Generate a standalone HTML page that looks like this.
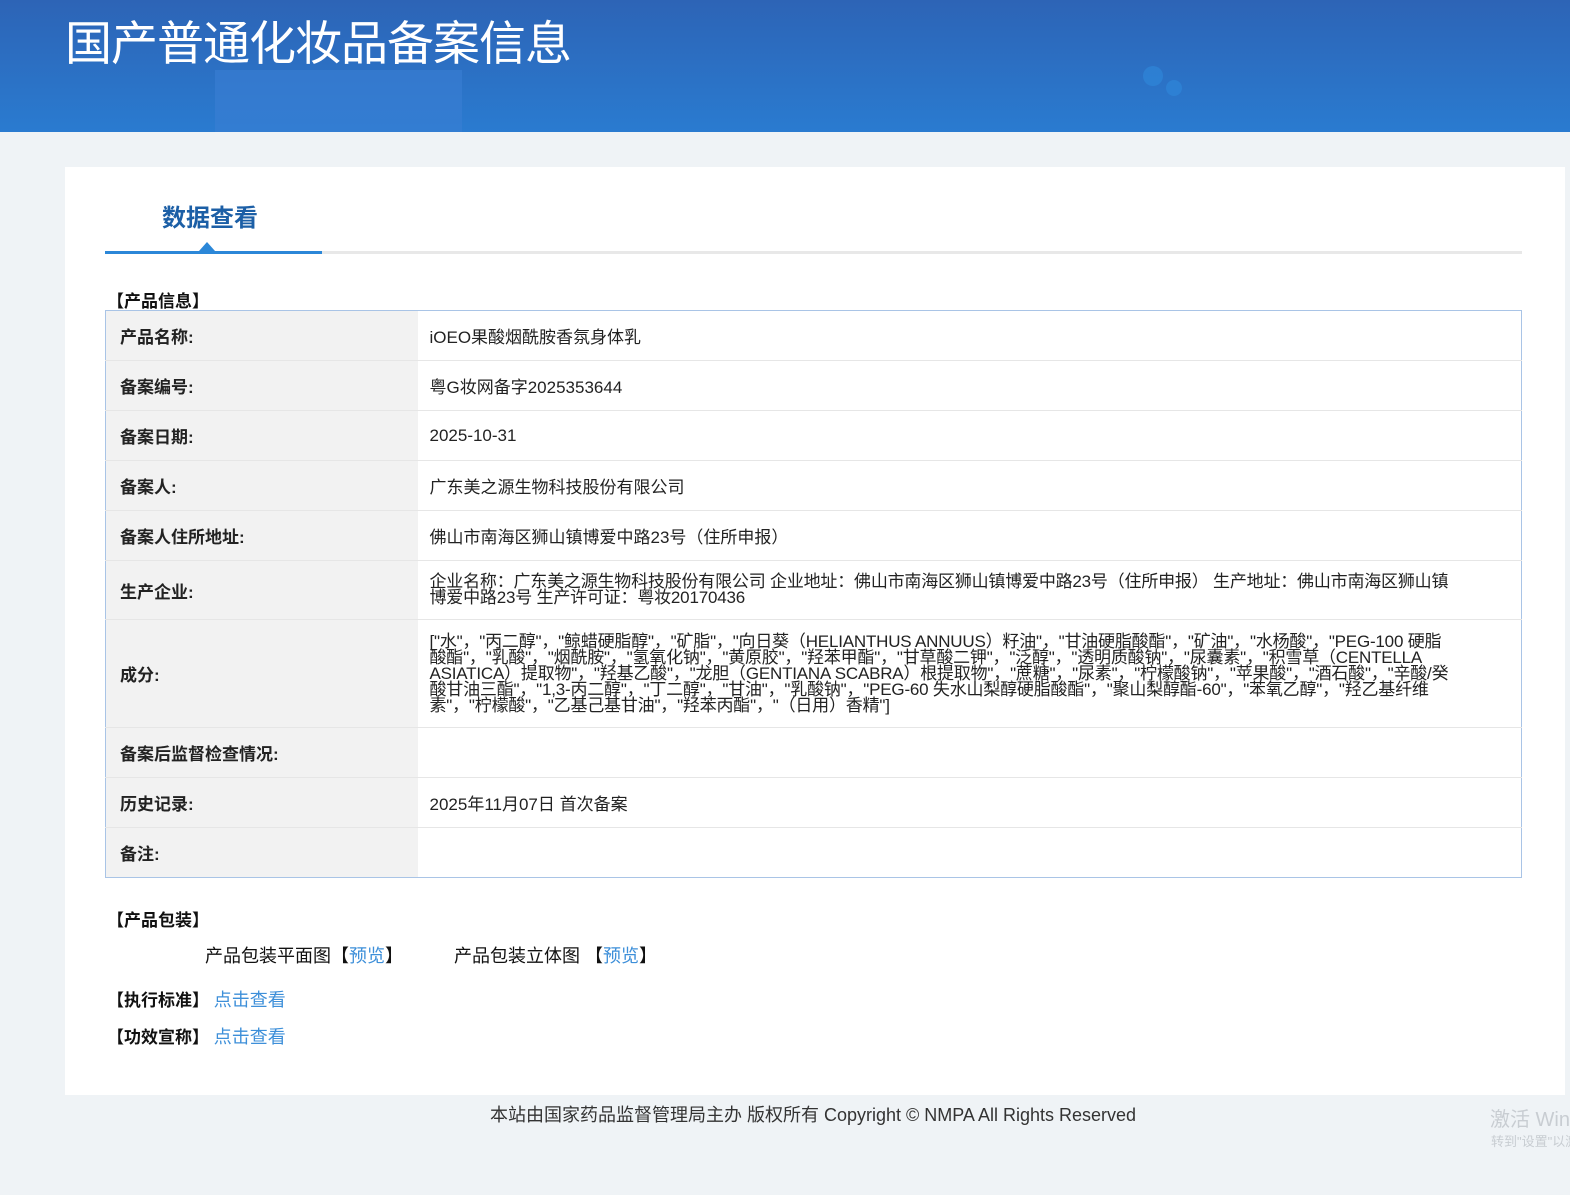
<!DOCTYPE html>
<html><head><meta charset="utf-8"><style>
*{margin:0;padding:0;box-sizing:border-box}
html,body{width:1570px;height:1195px;overflow:hidden}
body{background:#eff3f6;font-family:"Liberation Sans","Noto Sans CJK SC",sans-serif;color:#222;position:relative}
.hd{position:absolute;left:0;top:0;width:1570px;height:132px;background:linear-gradient(180deg,#2d64b6 0%,#2a7bd0 100%);overflow:hidden}
.hd .s1{position:absolute;left:215px;top:70px;width:247px;height:70px;background:#3b7fd4;opacity:.6}
.hd .c1{position:absolute;left:1143px;top:66px;width:20px;height:20px;border-radius:50%;background:#2f86d8;opacity:.7}
.hd .c2{position:absolute;left:1166px;top:80px;width:16px;height:16px;border-radius:50%;background:#2f86d8;opacity:.7}
.hd h1{position:absolute;left:65px;top:5px;font-size:47px;font-weight:normal;color:#fff;letter-spacing:-1px}
.card{position:absolute;left:65px;top:167px;width:1500px;height:928px;background:#fff}
.tab{position:absolute;left:97px;top:31px;font-size:24px;font-weight:bold;color:#1c5fa6}
.line{position:absolute;left:40px;top:84px;width:1417px;height:3px;background:#e8e8e8}
.line b{position:absolute;left:0;top:0;width:217px;height:3px;background:#2b87d8}
.tri{position:absolute;left:134px;top:75px;width:0;height:0;border-left:8px solid transparent;border-right:8px solid transparent;border-bottom:9px solid #2b87d8}
.sec{position:absolute;font-size:17px;font-weight:bold;color:#111}
table{position:absolute;left:40px;top:143px;width:1417px;border-collapse:collapse;border:1px solid #a9c4e6;font-size:17px}
td{border-top:1px solid #e6e6e6;height:50px;vertical-align:middle}
td.l{width:312px;background:#f2f2f2;padding-left:14px;font-weight:bold;color:#222}
td.v{padding-left:12px;padding-right:70px;color:#222}
td.t{line-height:16px;letter-spacing:-0.2px}
a{color:#3d8fd9;text-decoration:none}
.pk{position:absolute;font-size:18px;color:#111}
.ft{position:absolute;left:0;width:1570px;padding-left:56px;top:1101px;text-align:center;font-size:18px;color:#333}
.wm{position:absolute;left:1490px;top:1103px;width:80px;overflow:hidden;color:#c8cdd2;font-size:20px;white-space:nowrap}
.wm2{position:absolute;left:1491px;top:1131px;width:79px;overflow:hidden;color:#c8cdd2;font-size:13px;white-space:nowrap}
</style></head><body>
<div class="hd"><div class="s1"></div><div class="c1"></div><div class="c2"></div><h1>国产普通化妆品备案信息</h1></div>
<div class="card">
<div class="tab">数据查看</div>
<div class="line"><b></b></div><div class="tri"></div>
<div class="sec" style="left:42px;top:120px">【产品信息】</div>
<table>
<tr><td class="l" style="border-top:0">产品名称:</td><td class="v" style="border-top:0">iOEO果酸烟酰胺香氛身体乳</td></tr>
<tr><td class="l">备案编号:</td><td class="v">粤G妆网备字2025353644</td></tr>
<tr><td class="l">备案日期:</td><td class="v">2025-10-31</td></tr>
<tr><td class="l">备案人:</td><td class="v">广东美之源生物科技股份有限公司</td></tr>
<tr><td class="l">备案人住所地址:</td><td class="v">佛山市南海区狮山镇博爱中路23号（住所申报）</td></tr>
<tr><td class="l" style="height:59px">生产企业:</td><td class="v t">企业名称：广东美之源生物科技股份有限公司 企业地址：佛山市南海区狮山镇博爱中路23号（住所申报） 生产地址：佛山市南海区狮山镇博爱中路23号 生产许可证：粤妆20170436</td></tr>
<tr><td class="l" style="height:108px">成分:</td><td class="v t">["水"，"丙二醇"，"鲸蜡硬脂醇"，"矿脂"，"向日葵（HELIANTHUS ANNUUS）籽油"，"甘油硬脂酸酯"，"矿油"，"水杨酸"，"PEG-100 硬脂酸酯"，"乳酸"，"烟酰胺"，"氢氧化钠"，"黄原胶"，"羟苯甲酯"，"甘草酸二钾"，"泛醇"，"透明质酸钠"，"尿囊素"，"积雪草（CENTELLA ASIATICA）提取物"，"羟基乙酸"，"龙胆（GENTIANA SCABRA）根提取物"，"蔗糖"，"尿素"，"柠檬酸钠"，"苹果酸"，"酒石酸"，"辛酸/癸酸甘油三酯"，"1,3-丙二醇"，"丁二醇"，"甘油"，"乳酸钠"，"PEG-60 失水山梨醇硬脂酸酯"，"聚山梨醇酯-60"，"苯氧乙醇"，"羟乙基纤维素"，"柠檬酸"，"乙基己基甘油"，"羟苯丙酯"，"（日用）香精"]</td></tr>
<tr><td class="l">备案后监督检查情况:</td><td class="v"></td></tr>
<tr><td class="l">历史记录:</td><td class="v">2025年11月07日 首次备案</td></tr>
<tr><td class="l">备注:</td><td class="v"></td></tr>
</table>
<div class="sec" style="left:42px;top:739px">【产品包装】</div>
<div class="pk" style="left:140px;top:775px">产品包装平面图【<a>预览</a>】</div>
<div class="pk" style="left:389px;top:775px">产品包装立体图 【<a>预览</a>】</div>
<div class="sec" style="left:42px;top:819px">【执行标准】 <a style="font-weight:normal;font-size:18px">点击查看</a></div>
<div class="sec" style="left:42px;top:856px">【功效宣称】 <a style="font-weight:normal;font-size:18px">点击查看</a></div>
</div>
<div class="ft">本站由国家药品监督管理局主办 版权所有 Copyright © NMPA All Rights Reserved</div>
<div class="wm">激活 Windows</div>
<div class="wm2">转到"设置"以激活 Windows。</div>
</body></html>
